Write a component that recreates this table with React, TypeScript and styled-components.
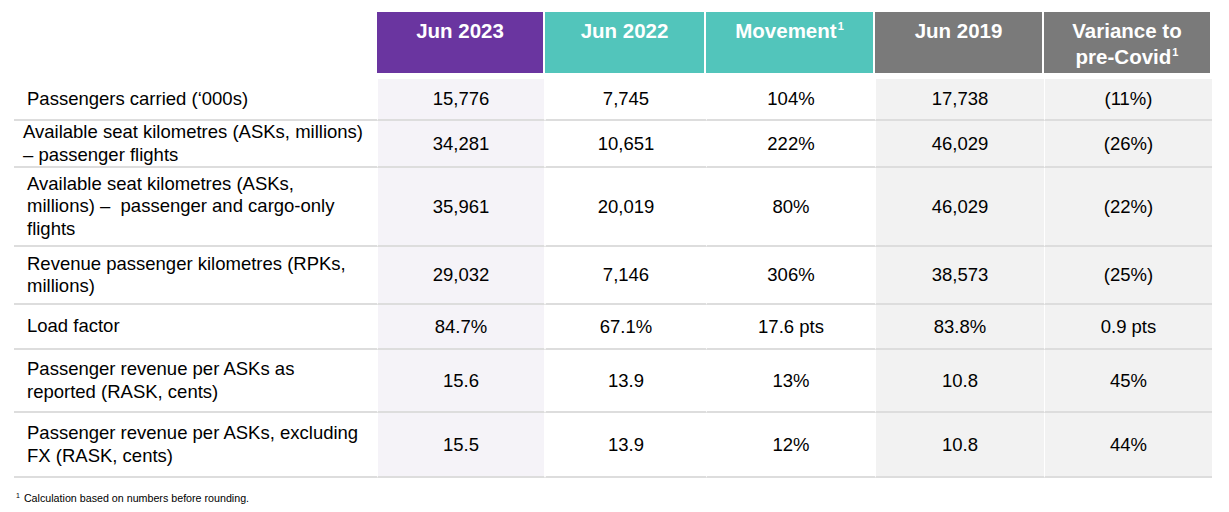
import React from "react";
import styled, { createGlobalStyle } from "styled-components";

const GlobalStyle = createGlobalStyle`
  html, body {
    margin: 0;
    padding: 0;
    background: #ffffff;
  }
  body {
    font-family: "Liberation Sans", Arial, sans-serif;
    color: #000000;
  }
`;

type Tone = "purple" | "teal" | "gray";
type Shade = "purple" | "gray" | "none";

const toneColors: Record<Tone, string> = {
  purple: "#6a35a0",
  teal: "#52c5bb",
  gray: "#7a7a7a",
};

const shadeColors: Record<Shade, string> = {
  purple: "#f5f3f8",
  gray: "#f2f2f2",
  none: "#ffffff",
};

const Page = styled.div`
  width: 1229px;
  height: 512px;
  padding: 12px 0 0 14px;
  box-sizing: border-box;
  overflow: hidden;
`;

const Table = styled.div`
  display: grid;
  grid-template-columns: 363px 168px 161px 169px 169px 168px;
  width: 1198px;
`;

const Corner = styled.div`
  margin-bottom: 6px;
`;

const HeadCell = styled.div<{ $tone: Tone }>`
  background: ${(p) => toneColors[p.$tone]};
  color: #ffffff;
  font-weight: 700;
  font-size: 20.5px;
  line-height: 26px;
  text-align: center;
  padding-top: 6px;
  height: 61px;
  box-sizing: border-box;
  border-right: 2px solid #ffffff;
  margin-bottom: 6px;

  &:last-child {
    border-right: none;
  }
`;

const Sup = styled.sup`
  font-size: 11px;
  line-height: 0;
  vertical-align: 8px;
  margin-left: 1px;
`;

const Label = styled.div<{ $h: number; $indent: number }>`
  height: ${(p) => p.$h}px;
  box-sizing: border-box;
  display: flex;
  align-items: center;
  padding-left: ${(p) => p.$indent}px;
  padding-right: 8px;
  font-size: 18.5px;
  line-height: 22.5px;
  border-bottom: 2px solid #dddddd;
`;

const Value = styled.div<{ $h: number; $shade: Shade; $edge?: boolean }>`
  height: ${(p) => p.$h}px;
  box-sizing: border-box;
  display: flex;
  align-items: center;
  justify-content: center;
  font-size: 18.5px;
  background: ${(p) => shadeColors[p.$shade]};
  border-bottom: 2px solid #dddddd;
  border-left: 1px solid #ffffff;
  border-right: ${(p) => (p.$edge ? "1px solid #ffffff" : "none")};
`;

const Footnote = styled.div`
  margin-top: 14px;
  padding-left: 2px;
  font-size: 10.7px;
  color: #000000;
`;

const FootSup = styled.sup`
  font-size: 7px;
  vertical-align: 4px;
  line-height: 0;
  margin-right: 4px;
`;

type Row = {
  label: React.ReactNode;
  height: number;
  indent: number;
  values: string[];
};

const rows: Row[] = [
  { label: "Passengers carried (‘000s)", height: 42, indent: 13, values: ["15,776", "7,745", "104%", "17,738", "(11%)"] },
  {
    label: (
      <>
        Available seat kilometres (ASKs, millions)
        <br />– passenger flights
      </>
    ),
    height: 47,
    indent: 9,
    values: ["34,281", "10,651", "222%", "46,029", "(26%)"],
  },
  {
    label: (
      <>
        Available seat kilometres (ASKs,
        <br />
        millions) –&nbsp; passenger and cargo-only
        <br />
        flights
      </>
    ),
    height: 79,
    indent: 13,
    values: ["35,961", "20,019", "80%", "46,029", "(22%)"],
  },
  {
    label: (
      <>
        Revenue passenger kilometres (RPKs,
        <br />
        millions)
      </>
    ),
    height: 58,
    indent: 13,
    values: ["29,032", "7,146", "306%", "38,573", "(25%)"],
  },
  { label: "Load factor", height: 45, indent: 13, values: ["84.7%", "67.1%", "17.6 pts", "83.8%", "0.9 pts"] },
  {
    label: (
      <>
        Passenger revenue per ASKs as
        <br />
        reported (RASK, cents)
      </>
    ),
    height: 63,
    indent: 13,
    values: ["15.6", "13.9", "13%", "10.8", "45%"],
  },
  {
    label: (
      <>
        Passenger revenue per ASKs, excluding
        <br />
        FX (RASK, cents)
      </>
    ),
    height: 65,
    indent: 13,
    values: ["15.5", "13.9", "12%", "10.8", "44%"],
  },
];

const shades: Shade[] = ["purple", "none", "none", "gray", "gray"];

export default function App() {
  return (
    <Page>
      <GlobalStyle />
      <Table>
        <Corner />
        <HeadCell $tone="purple">Jun 2023</HeadCell>
        <HeadCell $tone="teal">Jun 2022</HeadCell>
        <HeadCell $tone="teal">
          Movement<Sup>1</Sup>
        </HeadCell>
        <HeadCell $tone="gray">Jun 2019</HeadCell>
        <HeadCell $tone="gray">
          Variance to
          <br />
          pre-Covid<Sup>1</Sup>
        </HeadCell>
        {rows.map((row, i) => (
          <React.Fragment key={i}>
            <Label $h={row.height} $indent={row.indent}>
              <span>{row.label}</span>
            </Label>
            {row.values.map((v, j) => (
              <Value key={j} $h={row.height} $shade={shades[j]} $edge={j === 0}>
                {v}
              </Value>
            ))}
          </React.Fragment>
        ))}
      </Table>
      <Footnote>
        <FootSup>1</FootSup>Calculation based on numbers before rounding.
      </Footnote>
    </Page>
  );
}
